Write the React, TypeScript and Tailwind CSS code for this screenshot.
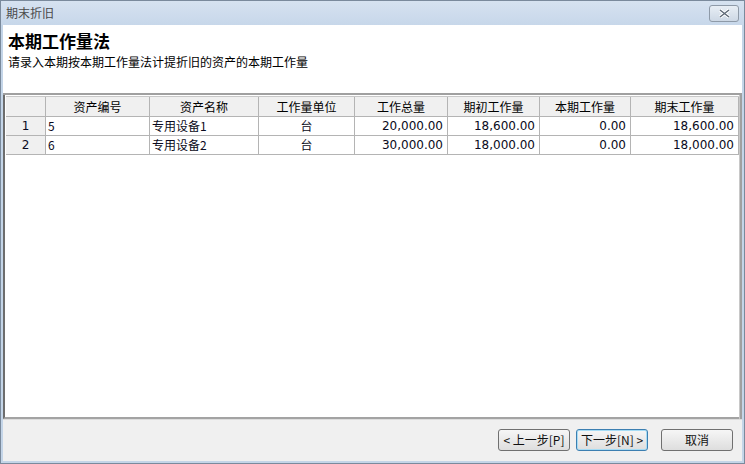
import React from "react";

const cols = [40, 104, 109, 96, 93, 92, 91, 108];
const heads = ["", "资产编号", "资产名称", "工作量单位", "工作总量", "期初工作量", "本期工作量", "期末工作量"];
const rows = [
  ["1", "5", "专用设备1", "台", "20,000.00", "18,600.00", "0.00", "18,600.00"],
  ["2", "6", "专用设备2", "台", "30,000.00", "18,000.00", "0.00", "18,000.00"],
];

const cjk = "font-['Noto_Sans_CJK_SC',sans-serif]";
const num = "font-['DejaVu_Sans','Noto_Sans_CJK_SC',sans-serif]";

function Btn({ children, focus }: { children: React.ReactNode; focus?: boolean }) {
  return (
    <button
      className={
        "h-[22px] w-[72px] rounded-[3px] border text-[12px] leading-none text-[#111] bg-gradient-to-b from-[#f6f6f6] to-[#dedede] " +
        (focus ? "border-[#3c7fb1] shadow-[inset_0_0_0_1px_#a6dcf5]" : "border-[#707070]")
      }
    >
      {children}
    </button>
  );
}

export default function App() {
  return (
    <div className={`w-[745px] h-[464px] flex flex-col bg-[#c4d5e8] border border-[#7a8a9c] ${cjk}`}>
      <div className="h-[24px] flex items-center justify-between pl-[5px] pr-[5px] bg-gradient-to-b from-[#d6e2f0] to-[#c7d7ea]">
        <span className="text-[12px] text-[#4a4a4a]">期末折旧</span>
        <div className="w-[30px] h-[17px] rounded-[3px] border border-[#8e9aa8] bg-gradient-to-b from-[#e8eef5] to-[#cdd8e5] flex items-center justify-center">
          <svg width="11" height="9" viewBox="0 0 11 9">
            <path d="M1 1 L10 8 M10 1 L1 8" stroke="#fff" strokeWidth="3.2" />
            <path d="M1 1 L10 8 M10 1 L1 8" stroke="#5d6875" strokeWidth="1.4" />
          </svg>
        </div>
      </div>
      <div className="flex-1 mx-[2px] mb-[2px] flex flex-col bg-white">
        <div className="h-[68px] px-[5px] pt-[4px]">
          <div className="text-[17px] font-bold text-black leading-[24px]">本期工作量法</div>
          <div className="text-[12px] text-black leading-[16px] mt-[1px]">请录入本期按本期工作量法计提折旧的资产的本期工作量</div>
        </div>
        <div className="h-[326px] border-t-2 border-[#a0a0a0] flex">
          <div className="flex-1 flex flex-col border-l-2 border-l-[#6d6d6d] border-b-2 border-b-[#a3a3a3] pl-[1px] pt-[1px]">
            <div className="flex h-[21px] bg-[#f0f0f0] border-t border-[#c8c8c8]">
              {heads.map((h, i) => (
                <div
                  key={i}
                  style={{ width: cols[i] }}
                  className="h-full flex items-center justify-center text-[12px] text-black border-r border-b border-[#b4b4b4]"
                >
                  {h}
                </div>
              ))}
            </div>
            {rows.map((r, ri) => (
              <div key={ri} className="flex h-[19px]">
                {r.map((c, i) => (
                  <div
                    key={i}
                    style={{ width: cols[i] }}
                    className={
                      "h-full flex items-center text-[12px] text-[#0a0a20] border-r border-b border-[#b4b4b4] " +
                      (i === 0
                        ? "justify-center bg-[#f0f0f0] " + num
                        : i === 3
                        ? "justify-center bg-white"
                        : i >= 4
                        ? "justify-end pr-[4px] bg-white text-[11px] " + num
                        : "justify-start pl-[2px] bg-white")
                    }
                  >
                    {c}
                  </div>
                ))}
              </div>
            ))}
          </div>
          <div className="w-[4px] border-l border-[#c8c8c8] border-r-2 border-r-[#a0a0a0] bg-white" />
        </div>
        <div className="flex-1 bg-[#f0f0f0] border-t border-[#dcdcdc] flex items-center justify-end gap-[6px] pr-[9px] pb-[1px]">
          <Btn>&lt; 上一步[P]</Btn>
          <Btn focus>下一步[N] &gt;</Btn>
          <div className="w-[1px]" />
          <Btn>取消</Btn>
        </div>
      </div>
    </div>
  );
}
